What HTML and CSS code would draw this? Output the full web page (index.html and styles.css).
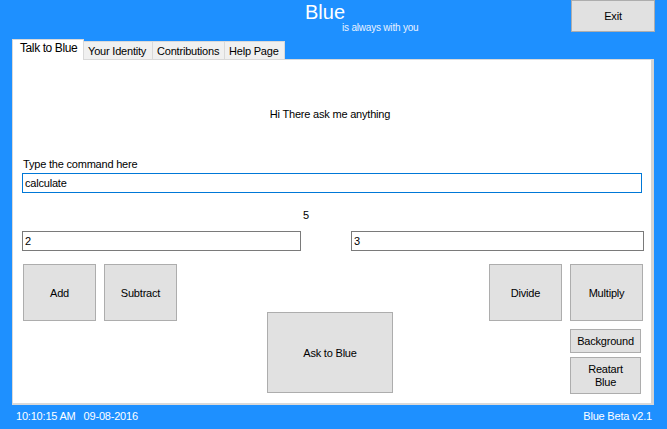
FILE: index.html
```html
<!DOCTYPE html>
<html lang="en">
<head>
    <meta charset="UTF-8">
    <meta name="viewport" content="width=device-width, initial-scale=1.0">
    <title>Blue</title>
    <link rel="stylesheet" href="styles.css">
</head>
<body>

    <div class="window">
        <div class="header">
            <div class="brand">
                <div class="brand-name">Blue</div>
                <div class="brand-sub">is always with you</div>
            </div>
            <button class="btn exit-btn">Exit</button>
        </div>

        <div class="tabs">
            <div class="tab active">Talk to Blue</div>
            <div class="tab tab-identity">Your Identity</div>
            <div class="tab tab-contrib">Contributions</div>
            <div class="tab tab-help">Help Page</div>
        </div>

        <div class="panel">
            <div class="greeting">Hi There ask me anything</div>

            <div class="cmd-label">Type the command here</div>
            <input type="text" class="field cmd-input" value="calculate">

            <div class="answer">5</div>

            <div class="num-row">
                <input type="text" class="field num-a" value="2">
                <input type="text" class="field num-b" value="3">
            </div>

            <div class="actions">
                <button class="btn op-btn">Add</button>
                <button class="btn op-btn btn-sub">Subtract</button>
                <button class="btn ask-btn">Ask to Blue</button>
                <div class="right-group">
                    <div class="op-pair">
                        <button class="btn op-btn">Divide</button>
                        <button class="btn op-btn btn-mul">Multiply</button>
                    </div>
                    <button class="btn small-btn">Background</button>
                    <button class="btn small-btn tall">Reatart<br>Blue</button>
                </div>
            </div>
        </div>

        <div class="footer">
            <span class="clock">10:10:15 AM</span>
            <span class="date">09-08-2016</span>
            <span class="version">Blue Beta v2.1</span>
        </div>
    </div>

</body>
</html>
```

FILE: styles.css
```css
body {
    margin: 0;
    padding: 0;
    background: #1E90FF;
    font-family: 'Liberation Sans', Arial, sans-serif;
    font-size: 11px;
    letter-spacing: -0.2px;
    color: #000;
}
.window {
    width: 667px;
    height: 429px;
    display: flex;
    flex-direction: column;
    overflow: hidden;
}

/* header */
.header {
    height: 39px;
    display: flex;
    align-items: flex-start;
}
.brand {
    margin-left: 305px;
    color: white;
}
.brand-name {
    font-size: 20px;
    line-height: 24px;
    letter-spacing: 0;
}
.brand-sub {
    font-size: 10px;
    line-height: 12px;
    margin-left: 37px;
    margin-top: -2px;
    color: #e8f2ff;
}
.btn {
    background: #e1e1e1;
    border: 1px solid #adadad;
    font-family: 'Liberation Sans', Arial, sans-serif;
    font-size: 11px;
    letter-spacing: -0.2px;
    color: #000;
    padding: 0;
    box-sizing: border-box;
    cursor: pointer;
}
.exit-btn {
    margin-left: auto;
    margin-right: 12px;
    width: 84px;
    height: 32px;
}

/* tabs */
.tabs {
    height: 20px;
    display: flex;
    align-items: flex-end;
    margin-left: 12px;
    position: relative;
    z-index: 2;
}
.tab {
    height: 18px;
    box-sizing: border-box;
    background: #f0f0f0;
    border: 1px solid #d9d9d9;
    border-bottom: none;
    line-height: 18px;
    padding: 0 0 0 4px;
    white-space: nowrap;
    margin-left: -1px;
}
.tab.active {
    background: white;
    height: 21px;
    margin-bottom: -1px;
    margin-left: 0;
    width: 72px;
    font-size: 12px;
    letter-spacing: -0.4px;
    line-height: 17px;
    padding: 0 0 0 7px;
}
.tab-identity { width: 70px; }
.tab-contrib { width: 73px; }
.tab-help { width: 61px; }

/* panel */
.panel {
    margin-left: 12px;
    width: 642px;
    height: 346px;
    box-sizing: border-box;
    background: white;
    border: 1px solid #d9d9d9;
    border-right: 3px solid #d4d4d4;
    border-bottom: 2px solid #d9d9d9;
    padding-left: 9px;
}
.greeting {
    text-align: center;
    line-height: 13px;
    margin-top: 48px;
    width: 616px;
}
.cmd-label {
    line-height: 13px;
    margin-top: 37px;
    margin-left: 1px;
}
.field {
    display: block;
    box-sizing: border-box;
    height: 20px;
    border: 1px solid #7a7a7a;
    font-family: 'Liberation Sans', Arial, sans-serif;
    font-size: 11px;
    letter-spacing: -0.2px;
    padding: 0 2px;
    margin: 0;
    outline: none;
    background: white;
    color: #000;
}
.cmd-input {
    width: 620px;
    margin-top: 2px;
    border-color: #0078d7;
}
.answer {
    line-height: 13px;
    margin-top: 16px;
    margin-left: 281px;
}
.num-row {
    display: flex;
    margin-top: 9px;
}
.num-a { width: 279px; }
.num-b { width: 293px; margin-left: 50px; }

/* buttons */
.actions {
    display: flex;
    align-items: flex-start;
    margin-top: 13px;
    margin-left: 1px;
}
.op-btn {
    width: 73px;
    height: 57px;
}
.btn-sub { margin-left: 8px; }
.ask-btn {
    width: 126px;
    height: 81px;
    margin-top: 48px;
    margin-left: 90px;
}
.right-group {
    margin-left: 96px;
    display: flex;
    flex-direction: column;
    align-items: flex-end;
    width: 154px;
}
.op-pair {
    display: flex;
}
.btn-mul { margin-left: 8px; }
.small-btn {
    width: 71px;
    height: 24px;
    margin-top: 8px;
    margin-right: 2px;
    line-height: 13px;
}
.small-btn.tall {
    height: 37px;
    margin-top: 4px;
}

/* footer */
.footer {
    height: 24px;
    display: flex;
    align-items: center;
    color: white;
    padding: 0 15px 3px 16px;
    box-sizing: border-box;
    font-size: 11px;
}
.date {
    margin-left: 8px;
}
.version {
    margin-left: auto;
}
```
